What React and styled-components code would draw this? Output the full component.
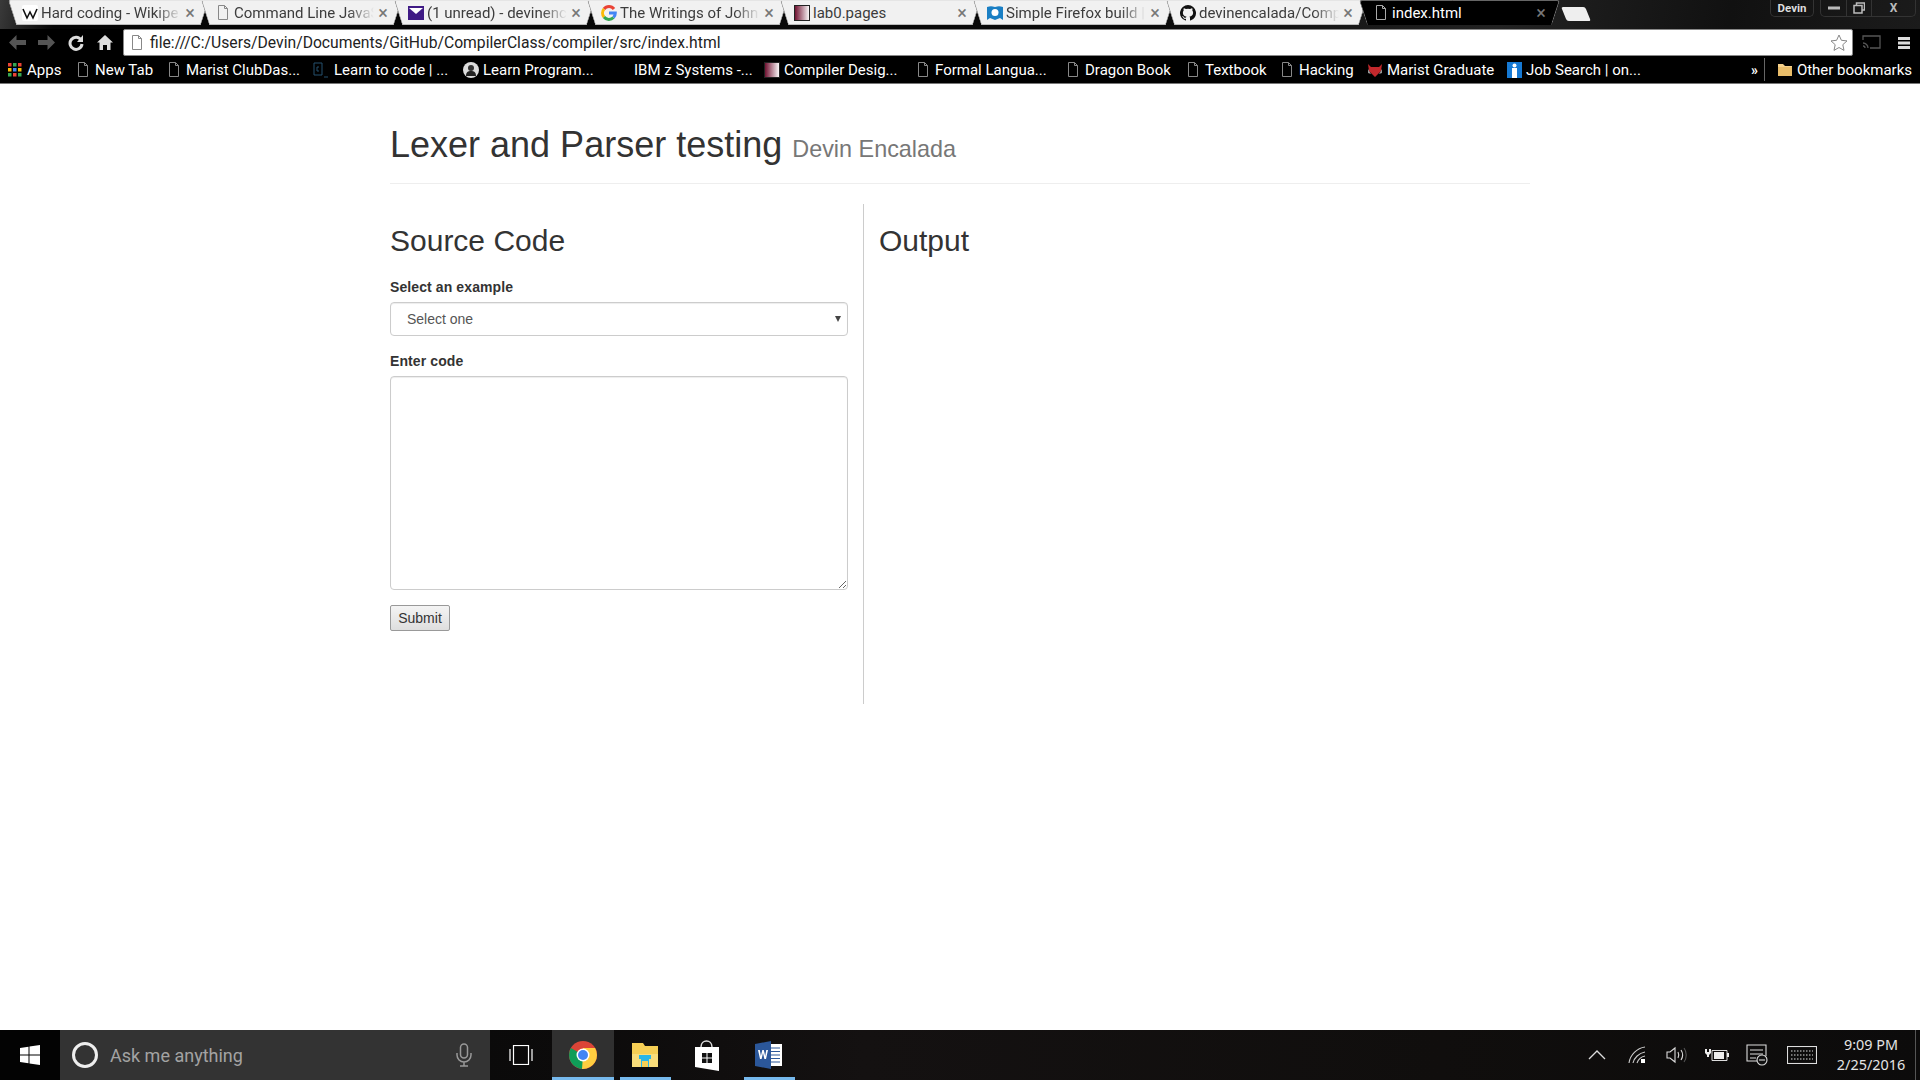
import React from "react";
import styled, { createGlobalStyle } from "styled-components";

const GlobalStyle = createGlobalStyle`
  html, body { margin: 0; padding: 0; height: 100%; background: #fff; overflow: hidden; }
  #root { height: 100%; }
  * { box-sizing: border-box; }
`;

const Screen = styled.div`
  width: 1920px;
  height: 1080px;
  display: flex;
  flex-direction: column;
  font-family: "Liberation Sans", Arial, sans-serif;
`;

/* browser chrome */
const Chrome = styled.header`
  height: 84px;
  background: #000;
  border-bottom: 1px solid #777;
  font-family: Roboto, "Noto Sans", sans-serif;
  flex: none;
`;

const TabStrip = styled.div`
  height: 29px;
  display: flex;
  align-items: flex-start;
  padding-left: 12px;
  background: linear-gradient(100deg, #3a3a3a 0, #050505 3%, #0a0a0a 60%, #222 78%, #111 90%, #1b1b1b 100%);
`;

const TabShape = styled.div`
  position: relative;
  width: 193px;
  height: 25px;
  flex: none;
  display: flex;
  align-items: center;
  padding: 0 9px 0 10px;
  color: ${(p) => (p.$active ? "#fff" : "#3c3c3c")};
  font-size: 15px;
  z-index: ${(p) => (p.$active ? 2 : 1)};

  &::before, &::after {
    content: "";
    position: absolute;
    top: 0;
    bottom: 0;
    width: 55%;
    background: ${(p) => (p.$active ? "#000" : "#f1f1f1")};
    border-top: 1px solid ${(p) => (p.$active ? "#666" : "#e5e5e5")};
    border-bottom: 1px solid ${(p) => (p.$active ? "#000" : "#bbb")};
    z-index: -1;
  }
  &::before {
    left: 0;
    transform: skewX(18deg);
    border-left: 1px solid ${(p) => (p.$active ? "#777" : "#999")};
    border-radius: 3px 0 0 0;
  }
  &::after {
    right: 0;
    transform: skewX(-18deg);
    border-right: 1px solid ${(p) => (p.$active ? "#777" : "#999")};
    border-radius: 0 3px 0 0;
  }
`;

const TabIcon = styled.span`
  width: 16px;
  height: 16px;
  flex: none;
  margin-right: 3px;
  display: flex;
  align-items: center;
  justify-content: center;
`;

const TabTitle = styled.span`
  flex: 1;
  min-width: 0;
  white-space: nowrap;
  ${(p) =>
    !p.$active &&
    "-webkit-mask-image: linear-gradient(90deg, #000 82%, transparent 100%); mask-image: linear-gradient(90deg, #000 82%, transparent 100%);"}
`;

const TabClose = styled.span`
  width: 12px;
  flex: none;
  font-size: 18px;
  color: #777;
  text-align: center;
  margin-left: 3px;
  line-height: 1;
`;

const NewTab = styled.div`
  width: 24px;
  height: 14px;
  margin: 7px 0 0 8px;
  background: #eee;
  transform: skewX(22deg);
  border-radius: 2px;
  flex: none;
`;

const StripSpacer = styled.div`
  flex: 1;
`;

const WindowArea = styled.div`
  display: flex;
  gap: 6px;
  margin-right: 4px;
`;

const ProfileBadge = styled.div`
  width: 44px;
  height: 17px;
  border: 1px solid #333;
  border-top: 0;
  border-radius: 0 0 5px 5px;
  color: #ddd;
  font-size: 11.5px;
  font-weight: 700;
  text-align: center;
  line-height: 17px;
`;

const WindowButtons = styled.div`
  display: flex;
  height: 17px;
  border: 1px solid #333;
  border-top: 0;
  border-radius: 0 0 5px 5px;
  color: #bbb;
  font-size: 12px;
  font-weight: 700;
  line-height: 15px;
`;

const WinButton = styled.span`
  width: ${(p) => p.$w}px;
  display: flex;
  align-items: center;
  justify-content: center;
  & + & { border-left: 1px solid #333; }
`;

const Toolbar = styled.div`
  height: 27px;
  display: flex;
  align-items: center;
  padding: 0 9px 0 3px;
`;

const NavButton = styled.span`
  width: 29px;
  height: 22px;
  flex: none;
  display: flex;
  align-items: center;
  justify-content: center;
  color: ${(p) => (p.$dim ? "#555" : "#ddd")};
`;

const AddressBar = styled.div`
  width: 1730px;
  height: 27px;
  margin-left: 4px;
  background: #fff;
  border: 1px solid #888;
  border-radius: 2px;
  display: flex;
  align-items: center;
  padding: 0 4px 0 7px;
  color: #222;
  font-size: 15.7px;
  flex: none;
`;

const AddressText = styled.span`
  flex: 1;
  margin-left: 7px;
  white-space: nowrap;
`;

const ToolIcons = styled.div`
  flex: 1;
  display: flex;
  align-items: center;
  justify-content: space-between;
  padding-left: 9px;
`;

const BookmarkBar = styled.div`
  height: 27px;
  display: flex;
  align-items: center;
  padding-left: 7px;
  color: #fff;
  font-size: 15px;
  white-space: nowrap;
`;

const Bookmark = styled.div`
  width: ${(p) => p.$w}px;
  flex: none;
  display: flex;
  align-items: center;
`;

const BookmarkIcon = styled.span`
  width: 16px;
  height: 16px;
  flex: none;
  margin-right: ${(p) => p.$gap ?? 4}px;
  display: flex;
  align-items: center;
  justify-content: center;
`;

const Chevrons = styled.span`
  margin-left: auto;
  margin-right: 6px;
  font-weight: 700;
  font-size: 14px;
`;

const BarSeparator = styled.span`
  width: 1px;
  height: 23px;
  background: #666;
  margin-right: 12px;
`;

const OtherBookmarks = styled.div`
  display: flex;
  align-items: center;
  padding-right: 8px;
`;

/* page */
const Page = styled.main`
  flex: 1;
  width: 1140px;
  margin-left: 390px;
  background: #fff;
  color: #333;
`;

const Heading = styled.div`
  padding: 41px 0 0 0;
  height: 100px;
  border-bottom: 1px solid #eee;
`;

const Title = styled.h1`
  margin: 0;
  font-size: 36px;
  font-weight: 500;
  line-height: 40px;
  color: #333;
`;

const Small = styled.small`
  font-size: 23.4px;
  font-weight: 400;
  color: #777;
`;

const Columns = styled.div`
  display: flex;
  margin-top: 20px;
  height: 500px;
`;

const SourceColumn = styled.section`
  width: 474px;
  padding-right: 15px;
  border-right: 1px solid #ccc;
`;

const OutputColumn = styled.section`
  flex: 1;
  padding-left: 15px;
`;

const SectionTitle = styled.h3`
  margin: 20px 0 10px;
  font-size: 30px;
  font-weight: 500;
  line-height: 33px;
  color: #333;
`;

const FieldLabel = styled.label`
  display: block;
  margin: 0 0 5px;
  padding-top: ${(p) => p.$top}px;
  font-size: 14px;
  font-weight: 700;
  line-height: 20px;
  letter-spacing: 0.1px;
  color: #333;
`;

const SelectBox = styled.div`
  height: 34px;
  border: 1px solid #ccc;
  border-radius: 4px;
  background: #fff;
  box-shadow: inset 0 1px 1px rgba(0, 0, 0, 0.075);
  display: flex;
  align-items: center;
  justify-content: space-between;
  padding: 0 6px 0 16px;
  color: #555;
  font-size: 14px;
`;

const SelectArrow = styled.span`
  width: 0;
  height: 0;
  border-left: 3px solid transparent;
  border-right: 3px solid transparent;
  border-top: 6px solid #444;
`;

const CodeArea = styled.textarea`
  display: block;
  width: 100%;
  height: 214px;
  border: 1px solid #ccc;
  border-radius: 4px;
  background: #fff;
  box-shadow: inset 0 1px 1px rgba(0, 0, 0, 0.075);
  padding: 6px 12px;
  outline: none;
  resize: vertical;
`;

const SubmitButton = styled.button`
  display: block;
  margin-top: 15px;
  width: 60px;
  height: 26px;
  padding: 0;
  border: 1px solid #999;
  border-radius: 2px;
  background: linear-gradient(#f4f4f4, #dedede);
  color: #333;
  font: 14px "Liberation Sans", Arial, sans-serif;
`;

/* taskbar */
const Taskbar = styled.footer`
  height: 50px;
  flex: none;
  display: flex;
  align-items: stretch;
  background: linear-gradient(90deg, #050505 0, #0c0b0b 30%, #141111 45%, #100e0d 75%, #0c0b0b 100%);
  font-family: "Noto Sans", Roboto, sans-serif;
`;

const StartButton = styled.div`
  width: 60px;
  background: #030303;
  display: flex;
  align-items: center;
  justify-content: center;
`;

const SearchBox = styled.div`
  width: 430px;
  background: #333;
  display: flex;
  align-items: center;
  padding: 0 18px 0 11px;
  color: #a3a3a3;
  font-family: Roboto, sans-serif;
  font-size: 18px;
`;

const SearchText = styled.span`
  flex: 1;
  margin-left: 11px;
`;

const TaskButton = styled.div`
  position: relative;
  width: 62px;
  display: flex;
  align-items: center;
  justify-content: center;
  background: ${(p) => (p.$current ? "#303030" : "transparent")};

  ${(p) =>
    p.$open &&
    `&::after {
      content: "";
      position: absolute;
      bottom: 0;
      left: ${p.$current ? 0 : 6}px;
      right: ${p.$current ? 0 : 5}px;
      height: 3px;
      background: #76b9ed;
    }`}
`;

const TaskSpacer = styled.div`
  flex: 1;
`;

const TrayIcon = styled.div`
  width: ${(p) => p.$w}px;
  display: flex;
  align-items: center;
  justify-content: center;
  flex: none;
`;

const Clock = styled.div`
  width: 88px;
  display: flex;
  flex-direction: column;
  justify-content: center;
  text-align: center;
  color: #e4e4e4;
  font-size: 14.4px;
  line-height: 20px;
  font-family: "Noto Sans", sans-serif;
`;

const DesktopEdge = styled.div`
  width: 5px;
  border-left: 1px solid #555;
`;

const FileIcon = ({ stroke = "#888" }) => (
  <svg width="12" height="15" viewBox="0 0 12 15" fill="none" stroke={stroke}>
    <path d="M1.5.5h6l3 3v11h-9zM7.5.5v3h3" />
  </svg>
);

const WikiIcon = () => (
  <svg width="16" height="16" viewBox="0 0 16 16">
    <rect width="16" height="16" rx="2" fill="#fff" />
    <path d="M1 4l4 9 3-6 3 6 4-9" fill="none" stroke="#111" strokeWidth="1.6" />
  </svg>
);

const MailIcon = () => (
  <svg width="16" height="14" viewBox="0 0 16 14">
    <rect width="16" height="14" fill="#3f1a85" />
    <path d="M1 2h14L8 8z" fill="#fff" />
  </svg>
);

const GoogleIcon = () => (
  <svg width="16" height="16" viewBox="0 0 16 16" fill="none" strokeWidth="3">
    <path d="M13 4A6.3 6.3 0 0 0 3 4" stroke="#ea4335" />
    <path d="M3 4a6.3 6.3 0 0 0 0 8" stroke="#fbbc05" />
    <path d="M3 12a6.3 6.3 0 0 0 9.5.5" stroke="#34a853" />
    <path d="M12.5 12.5A6.3 6.3 0 0 0 14.3 8H8" stroke="#4285f4" />
  </svg>
);

const GradientIcon = () => (
  <svg width="16" height="16" viewBox="0 0 16 16">
    <defs>
      <linearGradient id="maroon">
        <stop offset="0" stopColor="#6b0a2a" />
        <stop offset="1" stopColor="#fff" />
      </linearGradient>
    </defs>
    <rect x=".5" y=".5" width="15" height="15" fill="url(#maroon)" stroke="#222" />
  </svg>
);

const CloudIcon = () => (
  <svg width="16" height="16" viewBox="0 0 16 16">
    <path d="M0 2c3-1 5-1 8 0 3-1 5-1 8 0v13l-3-2-5 2-5-2-3 2z" fill="#1a7fc4" />
    <circle cx="8" cy="7.500" r="3.500" fill="#fff" />
  </svg>
);

const GithubIcon = () => (
  <svg width="16" height="16" viewBox="0 0 16 16">
    <path
      fill="#111"
      d="M8 0a8 8 0 0 0-2.500 15.600c.4.100.5-.2.500-.4v-1.400c-2.200.5-2.700-1-2.700-1-.4-.9-.9-1.200-.9-1.200-.7-.5.100-.5.100-.5.800.1 1.200.8 1.200.8.700 1.200 1.900.9 2.300.7.100-.5.300-.9.500-1.100-1.800-.2-3.600-.9-3.600-4 0-.9.300-1.600.800-2.100-.1-.2-.4-1 .1-2.100 0 0 .7-.2 2.200.8a7.500 7.500 0 0 1 4 0c1.500-1 2.200-.8 2.200-.8.500 1.100.2 1.900.1 2.100.5.500.8 1.200.8 2.100 0 3.100-1.900 3.800-3.700 4 .3.300.6.800.6 1.500v2.200c0 .2.100.5.500.4A8 8 0 0 0 8 0z"
    />
  </svg>
);

const AppsIcon = () => (
  <svg width="14" height="14" viewBox="0 0 14 14">
    {[0, 5, 10].flatMap((y, r) =>
      [0, 5, 10].map((x, c) => (
        <rect
          key={`${r}${c}`}
          x={x}
          y={y}
          width="3.500"
          height="3.500"
          fill={["#ea4335", "#fbbc05", "#34a853", "#4285f4"][(r + c * 2) % 4]}
        />
      ))
    )}
  </svg>
);

const CodeIcon = () => (
  <svg width="16" height="16" viewBox="0 0 16 16" fill="none" stroke="#24506e">
    <path d="M1 1h8v12H1z" />
    <path d="M6 5H4v4h2M11 15h4" />
  </svg>
);

const FaceIcon = () => (
  <svg width="16" height="16" viewBox="0 0 16 16">
    <circle cx="8" cy="8" r="8" fill="#ddd" />
    <path d="M3 14c0-4 2-5 5-5s5 1 5 5z" fill="#222" />
    <circle cx="8" cy="6" r="3" fill="#333" />
  </svg>
);

const FoxIcon = () => (
  <svg width="16" height="14" viewBox="0 0 16 14">
    <path d="M1 1l3 3h8l3-3-1 7-6 6-6-6z" fill="#c2282c" />
    <path d="M1 6l3 5-3-1zM15 6l-3 5 3-1z" fill="#999" />
  </svg>
);

const InfoIcon = () => (
  <svg width="15" height="16" viewBox="0 0 15 16">
    <rect width="15" height="16" fill="#1679d4" />
    <rect x="5" y="6" width="5" height="10" fill="#fff" />
    <circle cx="7.500" cy="3.500" r="2" fill="#fff" />
  </svg>
);

const FolderIcon = () => (
  <svg width="16" height="14" viewBox="0 0 16 14">
    <path d="M1 1h5l2 2h7v10H1z" fill="#f6d18b" />
    <path d="M1 4h14v9H1z" fill="#e9bd6a" />
  </svg>
);

const WindowsLogo = () => (
  <svg width="20" height="20" viewBox="0 0 20 20" fill="#fff">
    <path d="M0 3l8.500-1.200v7.700H0zM9.500 1.600L20 0v9.500H9.500zM0 10.500h8.500v7.700L0 17zM9.500 10.500H20V20L9.500 18.400z" />
  </svg>
);

const ChromeLogo = () => (
  <svg width="28" height="28" viewBox="0 0 28 28">
    <circle cx="14" cy="14" r="14" fill="#db4437" />
    <path d="M14 14L1.900 7A14 14 0 0 0 14 28l7-12z" fill="#0f9d58" />
    <path d="M14 14l-1 14h1A14 14 0 0 0 26.100 7H14z" fill="#ffcd40" />
    <circle cx="14" cy="14" r="6.500" fill="#fff" />
    <circle cx="14" cy="14" r="5" fill="#4285f4" />
  </svg>
);

const ExplorerLogo = () => (
  <svg width="28" height="26" viewBox="0 0 28 26">
    <path d="M1 1h11l2 3h13v21H1z" fill="#f6cf55" />
    <path d="M1 12h26v13H1z" fill="#f9dd7a" />
    <path d="M8 13h12v4h-2v8h-8v-8H8z" fill="#29b6e8" />
    <path d="M11 19h6v6h-6z" fill="#f6cf55" />
  </svg>
);

const StoreLogo = () => (
  <svg width="26" height="31" viewBox="0 0 26 31">
    <path d="M7 7c0-8 11-8 11 0" fill="none" stroke="#ddd" strokeWidth="1.500" />
    <path d="M1 7l24 0v24L1 27z" fill="#fff" />
    <path d="M8 13h4.500v4.500H8zM13.500 13H18v4.500h-4.500zM8 18.500h4.500V23H8zM13.500 18.500H18V23h-4.500z" fill="#111" />
  </svg>
);

const WordLogo = () => (
  <svg width="28" height="28" viewBox="0 0 28 28">
    <rect x="11" y="3" width="16" height="22" fill="#fff" />
    <path d="M14 7h11M14 10.500h11M14 14h11M14 17.500h11M14 21h11" stroke="#2b579a" strokeWidth="1.200" />
    <path d="M0 3l16-3v28L0 25z" fill="#2b579a" />
    <path d="M3 9l2 9h1.600l1.400-6 1.400 6H11l2-9h-1.700l-1.100 6-1.400-6H7.300l-1.400 6-1.100-6z" fill="#fff" />
  </svg>
);

const tabs = [
  { title: "Hard coding - Wikipe", icon: <WikiIcon /> },
  { title: "Command Line JavaS", icon: <FileIcon /> },
  { title: "(1 unread) - devinenc", icon: <MailIcon /> },
  { title: "The Writings of John", icon: <GoogleIcon /> },
  { title: "lab0.pages", icon: <GradientIcon />, solid: true },
  { title: "Simple Firefox build |", icon: <CloudIcon /> },
  { title: "devinencalada/Comp", icon: <GithubIcon /> },
  { title: "index.html", icon: <FileIcon stroke="#aaa" />, active: true },
];

const bookmarks = [
  { label: "Apps", icon: <AppsIcon />, w: 68 },
  { label: "New Tab", icon: <FileIcon />, w: 91 },
  { label: "Marist ClubDas...", icon: <FileIcon />, w: 147 },
  { label: "Learn to code | ...", icon: <CodeIcon />, w: 150, gap: 5 },
  { label: "Learn Program...", icon: <FaceIcon />, w: 150 },
  { label: "IBM z Systems -...", icon: null, w: 151, gap: 5 },
  { label: "Compiler Desig...", icon: <GradientIcon />, w: 151 },
  { label: "Formal Langua...", icon: <FileIcon />, w: 150 },
  { label: "Dragon Book", icon: <FileIcon />, w: 120 },
  { label: "Textbook", icon: <FileIcon />, w: 94 },
  { label: "Hacking", icon: <FileIcon />, w: 88 },
  { label: "Marist Graduate", icon: <FoxIcon />, w: 139 },
  { label: "Job Search | on...", icon: <InfoIcon />, w: 140 },
];

const App = () => (
  <Screen>
    <GlobalStyle />
    <Chrome>
      <TabStrip>
        {tabs.map((tab) => (
          <TabShape key={tab.title} $active={tab.active}>
            <TabIcon>{tab.icon}</TabIcon>
            <TabTitle $active={tab.active || tab.solid}>{tab.title}</TabTitle>
            <TabClose>×</TabClose>
          </TabShape>
        ))}
        <NewTab />
        <StripSpacer />
        <WindowArea>
          <ProfileBadge>Devin</ProfileBadge>
          <WindowButtons>
            <WinButton $w={25}>
              <svg width="12" height="4" viewBox="0 0 12 4" fill="#bbb">
                <rect width="12" height="3" y=".5" />
              </svg>
            </WinButton>
            <WinButton $w={25}>
              <svg width="12" height="12" viewBox="0 0 12 12" fill="none" stroke="#bbb" strokeWidth="1.500">
                <path d="M3.500 3V1h8v7H9" />
                <rect x="1" y="3.500" width="8" height="7.500" />
              </svg>
            </WinButton>
            <WinButton $w={44}>X</WinButton>
          </WindowButtons>
        </WindowArea>
      </TabStrip>
      <Toolbar>
        <NavButton $dim>
          <svg width="17" height="15" viewBox="0 0 17 15" fill="currentColor">
            <path d="M7.500 0L0 7.500 7.500 15v-5H17V5H7.500z" />
          </svg>
        </NavButton>
        <NavButton $dim>
          <svg width="17" height="15" viewBox="0 0 17 15" fill="currentColor">
            <path d="M9.500 0L17 7.500 9.500 15v-5H0V5h9.500z" />
          </svg>
        </NavButton>
        <NavButton>
          <svg width="16" height="16" viewBox="0 0 16 16" fill="none" stroke="currentColor" strokeWidth="3">
            <path d="M13 5a6 6 0 1 0 1 4" />
            <path d="M15 0v7H9z" fill="currentColor" stroke="none" />
          </svg>
        </NavButton>
        <NavButton>
          <svg width="16" height="15" viewBox="0 0 16 15" fill="currentColor">
            <path d="M8 0l8 7.500h-2.500V15H10v-5H6v5H2.500V7.500H0z" />
          </svg>
        </NavButton>
        <AddressBar>
          <FileIcon />
          <AddressText>file:///C:/Users/Devin/Documents/GitHub/CompilerClass/compiler/src/index.html</AddressText>
          <svg width="18" height="18" viewBox="0 0 18 18" fill="none" stroke="#888">
            <path d="M9 1l2.400 5.300 5.600.6-4.200 3.800 1.200 5.700L9 13.500l-5 2.900 1.200-5.700L1 6.900l5.600-.6z" />
          </svg>
        </AddressBar>
        <ToolIcons>
          <svg width="19" height="15" viewBox="0 0 19 15" fill="none" stroke="#555" strokeWidth="1.300">
            <path d="M1 5V1h17v12H8M1 8a5 5 0 0 1 5 5M1 11a2 2 0 0 1 2 2" />
          </svg>
          <svg width="14" height="14" viewBox="0 0 14 14" fill="#ddd">
            <path d="M1 1h12v3H1zM1 5.500h12v3H1zM1 10h12v3H1z" />
          </svg>
        </ToolIcons>
      </Toolbar>
      <BookmarkBar>
        {bookmarks.map((mark) => (
          <Bookmark key={mark.label} $w={mark.w}>
            <BookmarkIcon $gap={mark.gap}>{mark.icon}</BookmarkIcon>
            {mark.label}
          </Bookmark>
        ))}
        <Chevrons>»</Chevrons>
        <BarSeparator />
        <OtherBookmarks>
          <BookmarkIcon>
            <FolderIcon />
          </BookmarkIcon>
          Other bookmarks
        </OtherBookmarks>
      </BookmarkBar>
    </Chrome>

    <Page>
      <Heading>
        <Title>
          Lexer and Parser testing <Small>Devin Encalada</Small>
        </Title>
      </Heading>
      <Columns>
        <SourceColumn>
          <SectionTitle>Source Code</SectionTitle>
          <FieldLabel $top={10}>Select an example</FieldLabel>
          <SelectBox>
            Select one
            <SelectArrow />
          </SelectBox>
          <FieldLabel $top={15}>Enter code</FieldLabel>
          <CodeArea />
          <SubmitButton>Submit</SubmitButton>
        </SourceColumn>
        <OutputColumn>
          <SectionTitle>Output</SectionTitle>
        </OutputColumn>
      </Columns>
    </Page>

    <Taskbar>
      <StartButton>
        <WindowsLogo />
      </StartButton>
      <SearchBox>
        <svg width="28" height="28" viewBox="0 0 28 28" fill="none" stroke="#eee" strokeWidth="3">
          <circle cx="14" cy="14" r="11.500" />
        </svg>
        <SearchText>Ask me anything</SearchText>
        <svg width="16" height="24" viewBox="0 0 16 24" fill="none" stroke="#999" strokeWidth="1.500">
          <rect x="4.500" y="1" width="7" height="14" rx="3.500" />
          <path d="M1 10v2a7 7 0 0 0 14 0v-2M8 19v4M4 23h8" />
        </svg>
      </SearchBox>
      <TaskButton>
        <svg width="24" height="20" viewBox="0 0 24 20" fill="none" stroke="#fff" strokeWidth="1.200">
          <rect x="4.500" y=".5" width="15" height="19" />
          <path d="M1 4v12M23 4v12" />
        </svg>
      </TaskButton>
      <TaskButton $current $open>
        <ChromeLogo />
      </TaskButton>
      <TaskButton $open>
        <ExplorerLogo />
      </TaskButton>
      <TaskButton>
        <StoreLogo />
      </TaskButton>
      <TaskButton $open>
        <WordLogo />
      </TaskButton>
      <TaskSpacer />
      <TrayIcon $w={40}>
        <svg width="18" height="10" viewBox="0 0 18 10" fill="none" stroke="#ddd" strokeWidth="1.300">
          <path d="M1 9l8-8 8 8" />
        </svg>
      </TrayIcon>
      <TrayIcon $w={40}>
        <svg width="18" height="18" viewBox="0 0 18 18" fill="none" stroke="#ccc" strokeWidth="1.100">
          <path d="M1 17C2 9 9 2 17 1M5 17c1-5 6-10 12-11M9 17c1-3 3-6 8-7" />
          <rect x="13" y="13" width="4" height="4" fill="#fff" stroke="none" />
        </svg>
      </TrayIcon>
      <TrayIcon $w={40}>
        <svg width="22" height="18" viewBox="0 0 22 18" fill="none" stroke="#ddd" strokeWidth="1.100">
          <path d="M1 6h3l5-4v14l-5-4H1z" />
          <path d="M12 6c1 2 1 4 0 6M15 4c2 3 2 7 0 10" />
          <path d="M18 2c3 4 3 10 0 14" stroke="#555" />
        </svg>
      </TrayIcon>
      <TrayIcon $w={40}>
        <svg width="24" height="14" viewBox="0 0 24 14" fill="#eee">
          <path d="M0 1h2v3h2V1h2v4L4 7v2H2V7L0 5z" />
          <path d="M7 2.500h15v10H7z" fill="none" stroke="#ddd" />
          <rect x="9" y="4" width="10" height="7" />
          <rect x="22" y="5" width="2" height="4" />
        </svg>
      </TrayIcon>
      <TrayIcon $w={40}>
        <svg width="22" height="22" viewBox="0 0 22 22" fill="none" stroke="#ddd" strokeWidth="1.100">
          <path d="M12 17H1V1h19v11" />
          <path d="M4 6h13M4 10h13M4 14h6" />
          <circle cx="16" cy="16" r="5" fill="#111" />
          <path d="M13 16h6" />
        </svg>
      </TrayIcon>
      <TrayIcon $w={50}>
        <svg width="30" height="18" viewBox="0 0 30 18" fill="none" stroke="#ddd" strokeWidth="1.100">
          <rect x=".5" y=".5" width="29" height="17" />
          <path d="M4 5h22M4 9h22M4 13h22" strokeDasharray="1.500 1.500" />
        </svg>
      </TrayIcon>
      <Clock>
        <span>9:09 PM</span>
        <span>2/25/2016</span>
      </Clock>
      <DesktopEdge />
    </Taskbar>
  </Screen>
);

export default App;
